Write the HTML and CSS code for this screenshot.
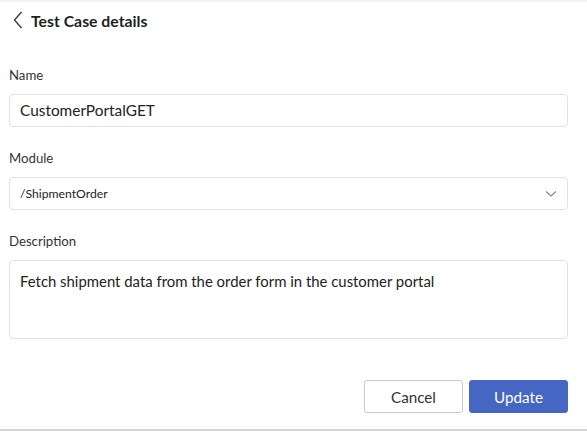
FILE: index.html
```html
<!DOCTYPE html>
<html>
<head>
<meta charset="utf-8">
<link rel="stylesheet" href="styles.css">
</head>
<body>
<div class="page">
  <div class="header">
    <svg class="back" width="12" height="18" viewBox="0 0 12 18"><path d="M9.5 1 L2.5 9 L9.5 17" fill="none" stroke="#333" stroke-width="1.3"/></svg>
    <span class="title">Test Case details</span>
  </div>
  <div class="form">
    <div class="field">
      <div class="label">Name</div>
      <div class="input name">CustomerPortalGET</div>
    </div>
    <div class="field">
      <div class="label">Module</div>
      <div class="input select">
        <span>/ShipmentOrder</span>
        <svg width="12" height="8" viewBox="0 0 12 8"><path d="M1 1.5 L6 6 L11 1.5" fill="none" stroke="#888" stroke-width="1.2"/></svg>
      </div>
    </div>
    <div class="field">
      <div class="label">Description</div>
      <div class="input area">Fetch shipment data from the order form in the customer portal</div>
    </div>
    <div class="actions">
      <button class="btn cancel">Cancel</button>
      <button class="btn update">Update</button>
    </div>
  </div>
</div>
</body>
</html>
```
FILE: styles.css
```css
html, body { margin: 0; padding: 0; background: #fff; }
body { font-family: Lato, "Open Sans", sans-serif; color: #222; }
.page {
  width: 587px; height: 431px; box-sizing: border-box;
  border-top: 2px solid #f3f3f3;
  border-bottom: 2px solid #d6d6d6;
  display: flex; flex-direction: column;
}
.header {
  display: flex; align-items: center;
  height: 36px; padding-left: 12px; gap: 7px;
}
.back { flex: none; }
.title { font-size: 15.8px; font-weight: 700; color: #1f1f1f; }
.form { padding: 27px 19px 0 9px; display: flex; flex-direction: column; }
.field { display: flex; flex-direction: column; margin-bottom: 21px; }
.label { font-size: 13.2px; line-height: 20px; color: #333; margin-bottom: 9px; }
.input {
  box-sizing: border-box; border: 1px solid #e2e2e2; border-radius: 4px;
  padding: 0 10px; color: #222;
}
.name { height: 33px; line-height: 31px; font-size: 15.4px; }
.select { height: 33px; display: flex; align-items: center; justify-content: space-between; font-size: 12.2px; padding-right: 10px; }
.area { height: 79px; font-size: 14.9px; padding-top: 9px; line-height: 22px; }
.actions { display: flex; justify-content: flex-end; gap: 6px; margin-top: 20px; }
.btn {
  width: 99px; height: 33px; border-radius: 3px; font-family: Lato, sans-serif;
  font-size: 15.2px; box-sizing: border-box; cursor: pointer;
}
.cancel { background: #fff; border: 1px solid #c9c9c9; color: #333; }
.update { background: #4567c3; border: 1px solid #4567c3; color: #fff; }
```
